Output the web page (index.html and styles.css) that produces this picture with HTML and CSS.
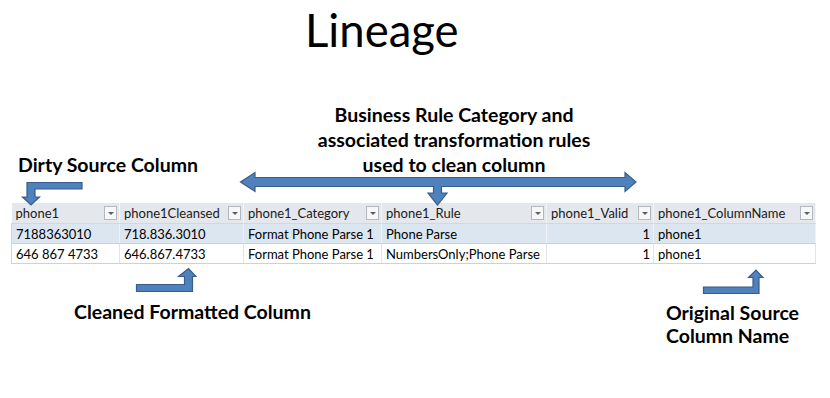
FILE: index.html
```html
<!DOCTYPE html>
<html>
<head>
<meta charset="utf-8">
<link rel="stylesheet" href="styles.css">
</head>
<body>
<div class="slide">
  <h1 class="title">Lineage</h1>
  <div class="upper">
    <div class="label dirty">Dirty Source Column</div>
    <div class="label rules">Business Rule Category and<br>associated transformation rules<br>used to clean column</div>
  </div>
  <table class="grid">
    <colgroup>
      <col class="c1"><col class="c2"><col class="c3"><col class="c4"><col class="c5"><col class="c6">
    </colgroup>
    <thead>
      <tr>
        <th><div class="hd"><span>phone1</span><i class="dd"></i></div></th>
        <th><div class="hd"><span>phone1Cleansed</span><i class="dd"></i></div></th>
        <th><div class="hd"><span>phone1_Category</span><i class="dd"></i></div></th>
        <th><div class="hd"><span>phone1_Rule</span><i class="dd"></i></div></th>
        <th><div class="hd"><span>phone1_Valid</span><i class="dd"></i></div></th>
        <th><div class="hd"><span>phone1_ColumnName</span><i class="dd"></i></div></th>
      </tr>
    </thead>
    <tbody>
      <tr class="sel">
        <td>7188363010</td><td>718.836.3010</td><td>Format Phone Parse 1</td><td>Phone Parse</td><td class="num">1</td><td>phone1</td>
      </tr>
      <tr>
        <td>646 867 4733</td><td>646.867.4733</td><td>Format Phone Parse 1</td><td>NumbersOnly;Phone Parse</td><td class="num">1</td><td>phone1</td>
      </tr>
    </tbody>
  </table>
  <div class="lower">
    <div class="label cleaned">Cleaned Formatted Column</div>
    <div class="label orig">Original Source<br>Column Name</div>
  </div>
  <svg class="arrows" width="830" height="398" viewBox="0 0 830 398" xmlns="http://www.w3.org/2000/svg">
    <g fill="#4f81bd" stroke="#385d8a" stroke-width="1.2" stroke-linejoin="miter">
      <path d="M240.5 182 L255 172.5 L255 177.5 L625 177.5 L625 172.5 L636 182 L625 191.5 L625 186.5 L441.5 186.5 L441.5 193 L447 193 L437.5 205 L428 193 L433.5 193 L433.5 186.5 L255 186.5 L255 191.5 Z"/>
      <path d="M82 182.5 L82 189 L35 189 L35 197 L39.5 197 L31 205 L22.5 197 L27 197 L27 182.5 Z"/>
      <path d="M136.5 284.5 L184.5 284.5 L184.5 276.5 L178.5 276.5 L188.5 268.5 L196 276.5 L192.5 276.5 L192.5 291.5 L136.5 291.5 Z"/>
      <path d="M703.5 287 L753 287 L753 277.5 L748.5 277.5 L756 270 L763 277.5 L759 277.5 L759 293.5 L703.5 293.5 Z"/>
    </g>
  </svg>
</div>
</body>
</html>
```
FILE: styles.css
```css
html, body {
  margin: 0;
  padding: 0;
  background: #ffffff;
}
.slide {
  position: relative;
  width: 830px;
  height: 398px;
  overflow: hidden;
  font-family: Lato, "Noto Sans", sans-serif;
  color: #000;
}
.title {
  margin: 0;
  padding: 5px 0 0 305px;
  font-weight: 400;
  font-size: 45.5px;
  line-height: 50px;
  height: 50px;
}
.label {
  font-weight: 700;
  font-size: 19.5px;
  line-height: 25px;
}
.upper {
  display: flex;
  align-items: flex-end;
  margin-top: 45px;
  height: 77px;
}
.dirty {
  width: 260px;
  padding-left: 18px;
  box-sizing: border-box;
}
.rules {
  width: 390px;
  margin-left: -1px;
  text-align: center;
}
.grid {
  margin: 26px 0 0 11px;
  border-collapse: collapse;
  table-layout: fixed;
  width: 804px;
  font-family: Lato, "Noto Sans", sans-serif;
  font-size: 13px;
  color: #000;
}
.c1 { width: 108px; }
.c2 { width: 124px; }
.c3 { width: 138px; }
.c4 { width: 165px; }
.c5 { width: 107px; }
.c6 { width: 162px; }
.grid th {
  height: 20px;
  padding: 0;
  background: #e4e7eb;
  font-weight: 400;
  text-align: left;
  color: #1a1a1a;
  border-right: 1px solid #f3f4f6;
  border-bottom: 1px solid #d3d8de;
}
.hd {
  display: flex;
  align-items: center;
  justify-content: space-between;
  padding: 0 2px 0 4px;
  height: 20px;
}
.hd span {
  white-space: nowrap;
}
.dd {
  position: relative;
  width: 13px;
  height: 14px;
  box-sizing: border-box;
  border: 1px solid #b3b8be;
  background: #f7f7f8;
  flex: none;
}
.dd::after {
  content: "";
  position: absolute;
  left: 3px;
  top: 5px;
  border-left: 3px solid transparent;
  border-right: 3px solid transparent;
  border-top: 3px solid #5a5f66;
}
.grid td {
  height: 19px;
  padding: 0 4px;
  white-space: nowrap;
  overflow: hidden;
  border-right: 1px solid #e1e5ea;
  border-bottom: 1px solid #c3d4ea;
}
.grid tr.sel td {
  background: #dce6f1;
  border-right-color: #eef2f8;
}
.grid td:first-child {
  border-left: 1px solid #cdd4dc;
}
.grid td.num {
  text-align: right;
  padding-right: 3px;
}
.lower {
  display: flex;
  margin-top: 35px;
}
.cleaned {
  padding-left: 74px;
  width: 666px;
  box-sizing: border-box;
}
.orig {
  margin-top: 2px;
  line-height: 23px;
}
.arrows {
  position: absolute;
  left: 0;
  top: 0;
  pointer-events: none;
}
```
